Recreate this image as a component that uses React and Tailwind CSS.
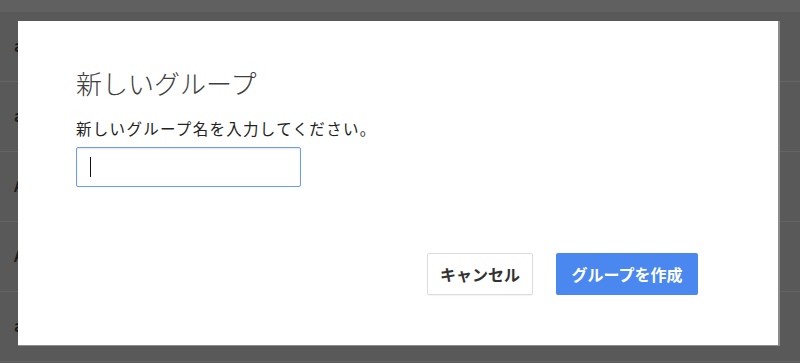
import React from "react";

const font = { fontFamily: '"Noto Sans CJK JP", "Noto Sans", sans-serif' };

export default function App() {
  const rows = ["a", "a", "A", "A", "a"];
  return (
    <div className="relative w-[800px] h-[363px] overflow-hidden bg-[#595959]" style={font}>
      <div className="h-[12px] bg-[#606060]" />
      <div className="flex flex-col">
        {rows.map((r, i) => (
          <div
            key={i}
            className="h-[70px] flex items-center pl-[14px] border-b border-[#646464] text-[15px] font-bold text-[#1c1c1c]"
          >
            {r}bc
          </div>
        ))}
      </div>
      <div className="absolute left-[18px] top-[21px] w-[762px] h-[325px] bg-white border-r-2 border-b border-[#8c8c8c] flex flex-col pl-[58px] pr-[80px]">
        <div className="mt-[45px] text-[26px] leading-[34px] font-light text-[#404040]">新しいグループ</div>
        <div className="mt-[17px] text-[15.5px] leading-[22px] tracking-[1.3px] text-[#222]">
          新しいグループ名を入力してください。
        </div>
        <div className="mt-[8px] w-[225px] h-[40px] rounded-[2px] border border-[#6b9cf0] shadow-[inset_0_1px_2px_rgba(0,0,0,0.1)] flex items-center pl-[13px]">
          <span className="block w-[1px] h-[20px] bg-[#111]" />
        </div>
        <div className="mt-auto mb-[50px] flex justify-end gap-[23px]">
          <button className="w-[106px] h-[42px] rounded-[2px] border border-[#dcdcdc] bg-white text-[16px] font-bold text-[#333] shadow-[0_1px_1px_rgba(0,0,0,0.05)]">
            キャンセル
          </button>
          <button className="w-[142px] h-[42px] rounded-[2px] bg-[#4a87ee] text-[16px] font-bold text-white">
            グループを作成
          </button>
        </div>
      </div>
    </div>
  );
}
